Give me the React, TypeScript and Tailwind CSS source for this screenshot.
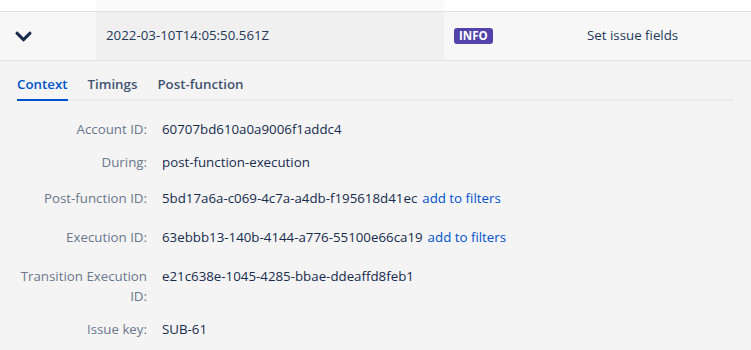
import React from "react";
import { FaChevronDown } from "react-icons/fa";

const rows: { label: string; value: string; filter?: boolean; extra?: string }[] = [
  { label: "Account ID:", value: "60707bd610a0a9006f1addc4" },
  { label: "During:", value: "post-function-execution" },
  { label: "Post-function ID:", value: "5bd17a6a-c069-4c7a-a4db-f195618d41ec", filter: true },
  { label: "Execution ID:", value: "63ebbb13-140b-4144-a776-55100e66ca19", filter: true },
  { label: "Transition Execution ID:", value: "e21c638e-1045-4285-bbae-ddeaffd8feb1", extra: "mt-[3px]" },
  { label: "Issue key:", value: "SUB-61" },
];

const tabs = ["Context", "Timings", "Post-function"];

export default function App() {
  return (
    <div
      className="h-[350px] w-[751px] overflow-hidden bg-[#f4f4f4] text-[13.3px] text-[#172b4d]"
      style={{ fontFamily: '"Open Sans", "Noto Sans", sans-serif' }}
    >
      <div className="flex h-[12px] border-b border-[#dfe1e6] bg-white">
        <div className="w-[96px] bg-white" />
        <div className="w-[348px] bg-[#fafafa]" />
        <div className="flex-1 bg-white" />
      </div>
      <div className="flex h-[49px] border-b border-[#dfe1e6] bg-[#f7f7f8]">
        <div className="flex w-[96px] items-center pl-[15px]">
          <FaChevronDown className="h-[19px] w-[17px] text-[#172b4d]" />
        </div>
        <div className="flex w-[348px] items-center bg-[#f0f0f0] pl-[10px] text-[#253858]">
          2022-03-10T14:05:50.561Z
        </div>
        <div className="flex w-[143px] items-center pl-[10px]">
          <span className="rounded-[3px] bg-[#5243aa] px-[5px] text-[11.5px] font-bold leading-[16px] text-white">
            INFO
          </span>
        </div>
        <div className="flex flex-1 items-center text-[#253858]">Set issue fields</div>
      </div>

      <div className="px-[17px] pt-[14px]">
        <div className="flex gap-[20px] border-b-2 border-[#ebecf0]">
          {tabs.map((t, i) => (
            <div
              key={t}
              className={`-mb-[2px] pb-[4px] font-semibold ${
                i === 0 ? "border-b-2 border-[#0052cc] text-[#0052cc]" : "text-[#42526e]"
              }`}
            >
              {t}
            </div>
          ))}
        </div>
      </div>

      <div className="flex flex-col gap-[13px] pt-[18px]">
        {rows.map((r) => (
          <div
            key={r.label}
            className={`flex leading-[20px] ${r.filter ? "h-[26px] items-center" : ""} ${r.extra ?? ""}`}
          >
            <div className="ml-[17px] w-[130px] shrink-0 text-right text-[#6b778c]">{r.label}</div>
            <div className="pl-[15px] text-[#172b4d]">
              {r.value}
              {r.filter && <span className="ml-[5px] text-[#0052cc]">add to filters</span>}
            </div>
          </div>
        ))}
      </div>
    </div>
  );
}
